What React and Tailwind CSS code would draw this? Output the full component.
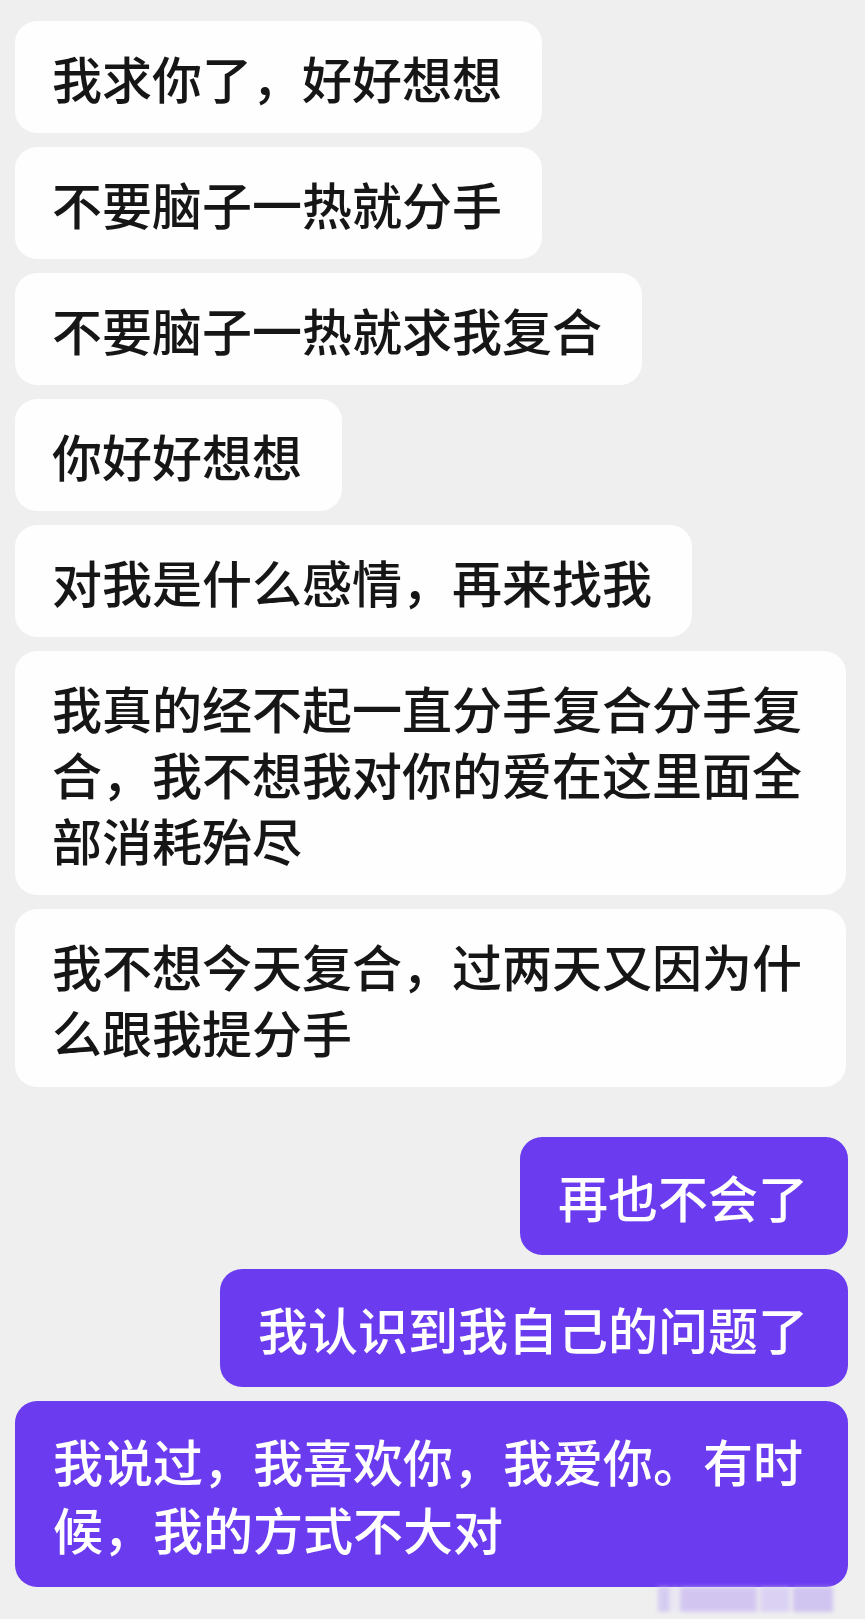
import React from 'react';

const fromThem = [
  '我求你了，好好想想',
  '不要脑子一热就分手',
  '不要脑子一热就求我复合',
  '你好好想想',
  '对我是什么感情，再来找我',
  '我真的经不起一直分手复合分手复合，我不想我对你的爱在这里面全部消耗殆尽',
  '我不想今天复合，过两天又因为什么跟我提分手',
];

const fromMe = [
  '再也不会了',
  '我认识到我自己的问题了',
  '我说过，我喜欢你，我爱你。有时候，我的方式不大对',
];

const font = { fontFamily: '"Noto Sans CJK SC", "Noto Sans", sans-serif' };

const App = () => {
  return (
    <div className="min-h-[1619px] w-full bg-[#efefef] pt-[21px] pl-[15px] pr-[17px]" style={font}>
      <div className="flex flex-col items-start gap-[14px]">
        {fromThem.map((text) => (
          <div
            key={text}
            className="max-w-[831px] rounded-[22px] bg-[#fefefe] py-[23px] pl-[37px] pr-[40px] text-[50px] leading-[66px] font-medium text-[#161616]"
          >
            {text}
          </div>
        ))}
      </div>

      <div className="mt-[50px] flex flex-col items-end gap-[14px]">
        {fromMe.map((text) => (
          <div
            key={text}
            className="max-w-full rounded-[22px] bg-[#6b3cef] py-[25px] pl-[38px] pr-[40px] text-[50px] leading-[68px] font-medium text-white"
          >
            {text}
          </div>
        ))}
      </div>

      {/* blurred watermark */}
      <div className="flex justify-end pr-[15px]">
        <div className="flex h-[25px] w-[175px] items-stretch gap-[3px] blur-[2px] opacity-70">
          <div className="w-[12px] bg-[#cbbdf3]" />
          <div className="w-[4px] bg-[#e6dff9]" />
          <div className="flex-1 bg-[#c7b6f2]" />
          <div className="w-[30px] bg-[#d3c6f5]" />
          <div className="w-[40px] bg-[#c4b2f1]" />
        </div>
      </div>
    </div>
  );
};

export default App;
